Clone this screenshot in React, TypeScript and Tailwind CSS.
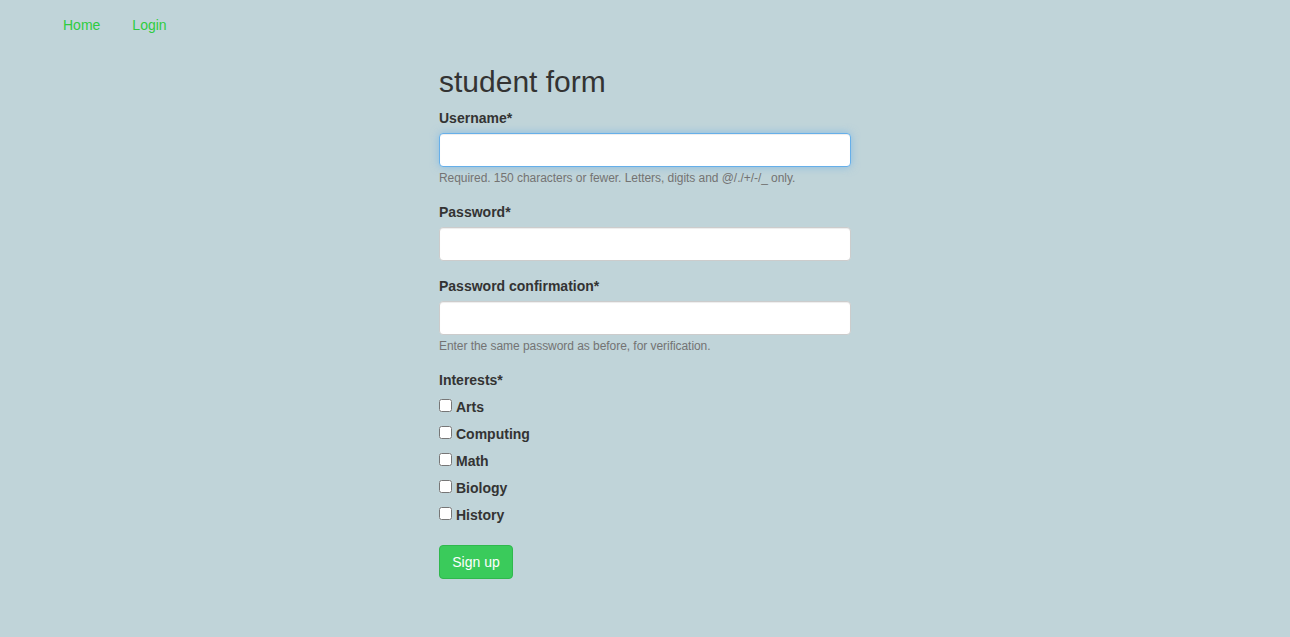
import React from "react";

const font = { fontFamily: '"Liberation Sans", Arial, sans-serif' };

function Field({ label, help, focused }: { label: string; help?: string; focused?: boolean }) {
  return (
    <div className="mb-[15px]">
      <label className="block text-[14px] font-bold leading-[20px] mb-[5px] text-[#333]">{label}</label>
      <input
        className={
          "block w-full h-[34px] rounded-[4px] bg-white px-3 text-[14px] outline-none border " +
          (focused
            ? "border-[#66afe9] shadow-[inset_0_1px_1px_rgba(0,0,0,0.075),0_0_8px_rgba(102,175,233,0.6)]"
            : "border-[#ccc] shadow-[inset_0_1px_1px_rgba(0,0,0,0.075)]")
        }
      />
      {help && <p className="mt-[3px] text-[12px] leading-[17px] text-[#737373] tracking-[-0.05px]">{help}</p>}
    </div>
  );
}

export default function App() {
  const interests = ["Arts", "Computing", "Math", "Biology", "History"];
  return (
    <div className="min-h-[637px] bg-[#c0d4d9] text-[#333] text-[14px]" style={font}>
      <nav className="h-[50px] flex items-center pl-[63px] gap-[32px] text-[14px]">
        <a className="text-[#2ecc40] leading-[20px]">Home</a>
        <a className="text-[#2ecc40] leading-[20px]">Login</a>
      </nav>
      <div className="w-[412px] ml-[439px]">
        <h2 className="text-[30px] leading-[33px] mt-[15px] mb-[10px] text-[#333]">student form</h2>
        <Field label="Username*" focused help="Required. 150 characters or fewer. Letters, digits and @/./+/-/_ only." />
        <Field label="Password*" />
        <Field label="Password confirmation*" help="Enter the same password as before, for verification." />
        <div className="mb-[16px]">
          <label className="block text-[14px] font-bold leading-[20px] mb-[4px]">Interests*</label>
          <div className="flex flex-col">
            {interests.map((i) => (
              <label key={i} className="flex items-center h-[27px] font-bold text-[14px]">
                <input type="checkbox" className="m-0 w-[13px] h-[13px] mr-[4px] -mt-[4px]" />
                {i}
              </label>
            ))}
          </div>
        </div>
        <button className="h-[34px] w-[74px] rounded-[4px] bg-[#3acb5b] border border-[#2fb84d] text-white text-[14px] leading-[20px]">
          Sign up
        </button>
      </div>
    </div>
  );
}
